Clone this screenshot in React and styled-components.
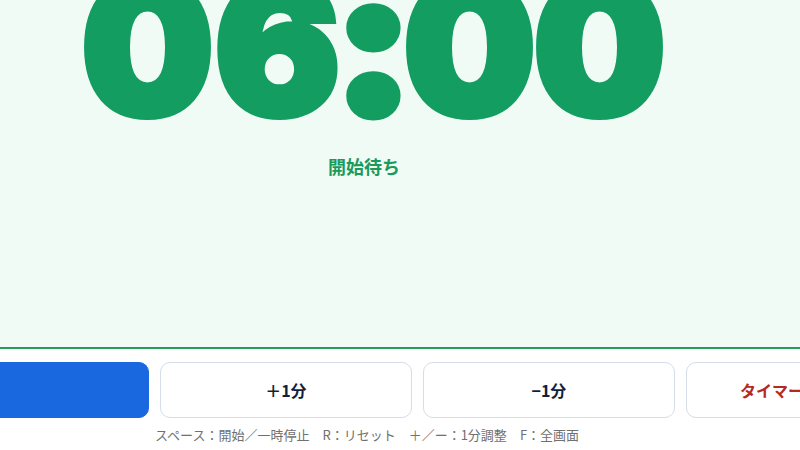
import React from "react";
import styled, { createGlobalStyle } from "styled-components";

const GlobalStyle = createGlobalStyle`
  html, body {
    margin: 0;
    padding: 0;
    overflow: hidden;
    background: #ffffff;
  }
  #root {
    height: 100vh;
  }
`

const Page = styled.div`
  height: 100vh;
  display: flex;
  flex-direction: column;
  font-family: "Noto Sans CJK JP", "Noto Sans", sans-serif;
`

const Stage = styled.main`
  flex: 1;
  min-height: 0;
  background: #f0fbf5;
  overflow: hidden;
  display: flex;
`

const Column = styled.div`
  width: 734px;
  flex-shrink: 0;
  display: flex;
  flex-direction: column;
  align-items: center;
  justify-content: flex-end;
  padding-bottom: ${(p) => p.$bottom || 0}px;
  box-sizing: border-box;
`

// Inter black plus a stroke of the same green to get the extra-heavy digits
const Clock = styled.div`
  display: flex;
  margin-left: 13px;
  font-family: "Inter", "Noto Sans", sans-serif;
  font-weight: 900;
  font-size: 185px;
  line-height: 1;
  color: #139d60;
  -webkit-text-stroke: 8px #139d60;
  white-space: nowrap;
`

const Cell = styled.span`
  width: ${(p) => (p.$colon ? 62 : 130)}px;
  display: flex;
  justify-content: center;
`

const Glyph = styled.span`
  display: inline-block;
  transform-origin: 50% 87%;
  transform: ${(p) => (p.$colon ? "scale(1.2, 1.1)" : "none")};
`

const Status = styled.div`
  margin-top: 13px;
  margin-right: 6px;
  font-size: 18px;
  line-height: 27px;
  font-weight: 700;
  color: #1b9a5c;
`

const Footer = styled.footer`
  flex-shrink: 0;
  background: #ffffff;
  border-top: 2px solid #22a05a;
  padding: 13px 0 6px;
  display: flex;
`

const Controls = styled.div`
  width: 1142px;
  flex-shrink: 0;
  display: grid;
  grid-template-columns: 1.4fr 1fr 1fr 1fr;
  gap: 11px;
`

const Button = styled.button`
  height: 56px;
  border-radius: 10px;
  border: 1px solid ${(p) => (p.$primary ? "#1968e0" : "#d5dde9")};
  background: ${(p) => (p.$primary ? "#1968e0" : "#ffffff")};
  color: ${(p) => (p.$primary ? "#ffffff" : p.$danger ? "#b42a20" : "#0f1f3d")};
  font-family: "Noto Sans CJK JP", "Noto Sans", sans-serif;
  font-size: 16px;
  font-weight: 700;
  cursor: pointer;
`

const Hints = styled.div`
  margin-top: 7px;
  display: flex;
  gap: 13px;
  font-size: 13px;
  line-height: 19px;
  color: #707070;
  white-space: nowrap;
`

const time = "06:00";

const App = () => {
  return (
    <Page>
      <GlobalStyle />
      <Stage>
        <Column $bottom={167}>
          <Clock>
            {time.split("").map((ch, i) => (
              <Cell key={i} $colon={ch === ":"}>
                <Glyph $colon={ch === ":"}>{ch}</Glyph>
              </Cell>
            ))}
          </Clock>
          <Status>開始待ち</Status>
        </Column>
      </Stage>
      <Footer>
        <Column>
          <Controls>
            <Button $primary>開始</Button>
            <Button>＋1分</Button>
            <Button>−1分</Button>
            <Button $danger>タイマーをリセット</Button>
          </Controls>
          <Hints>
            <span>スペース：開始／一時停止</span>
            <span>R：リセット</span>
            <span>＋／ー：1分調整</span>
            <span>F：全画面</span>
          </Hints>
        </Column>
      </Footer>
    </Page>
  );
};

export default App;
